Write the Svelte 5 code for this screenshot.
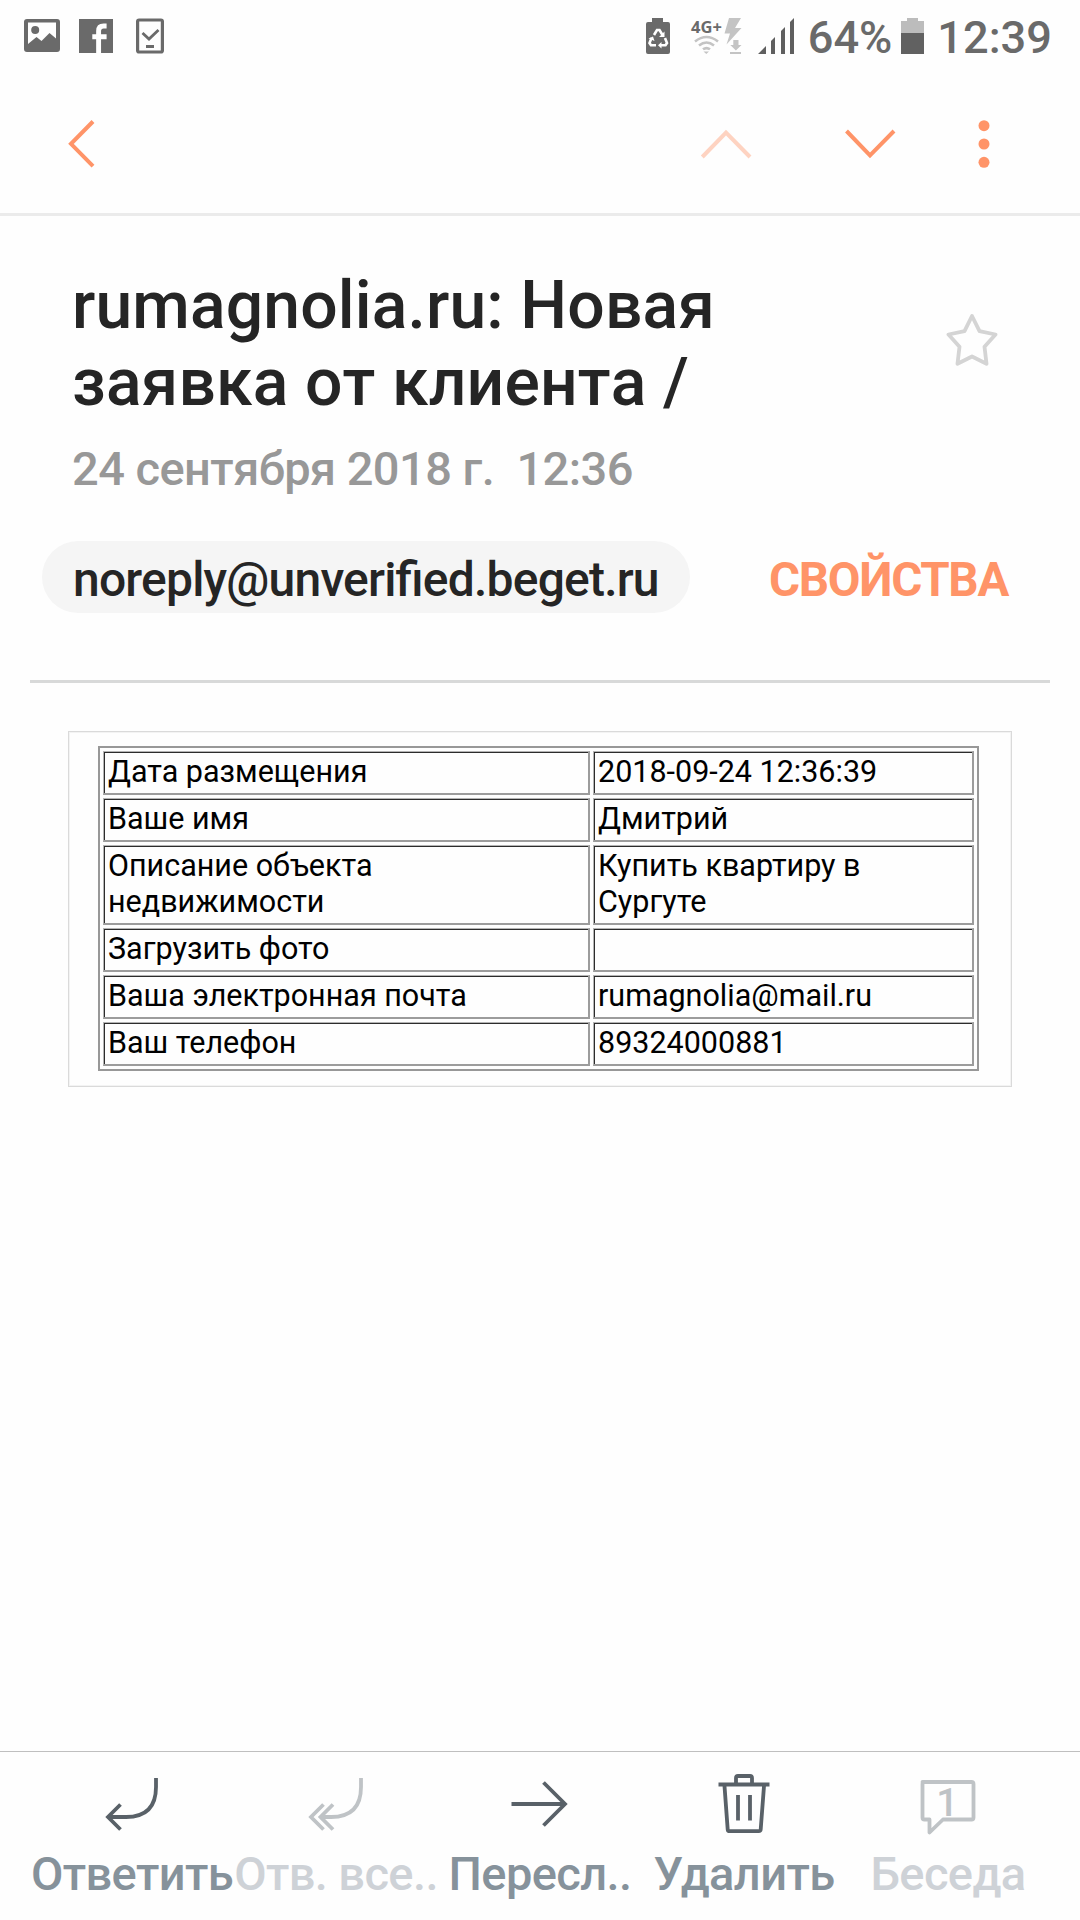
<script lang="ts">
  interface Action {
    icon: 'reply' | 'replyAll' | 'forward' | 'trash' | 'thread';
    label: string;
    disabled?: boolean;
  }

  const title = 'rumagnolia.ru: Новая заявка от клиента /';
  const sender = 'noreply@unverified.beget.ru';

  const rows = [
    ['Дата размещения', '2018-09-24 12:36:39'],
    ['Ваше имя', 'Дмитрий'],
    ['Описание объекта недвижимости', 'Купить квартиру в Сургуте'],
    ['Загрузить фото', ''],
    ['Ваша электронная почта', 'rumagnolia@mail.ru'],
    ['Ваш телефон', '89324000881'],
  ];

  const actions: Action[] = [
    { icon: 'reply', label: 'Ответить' },
    { icon: 'replyAll', label: 'Отв. все..', disabled: true },
    { icon: 'forward', label: 'Пересл..' },
    { icon: 'trash', label: 'Удалить' },
    { icon: 'thread', label: 'Беседа', disabled: true },
  ];
</script>

<div class="screen">
  <div class="status-bar">
    <svg width="144" height="40" viewBox="22 16 144 40">
      <path
        fill="#6a6a6a"
        fill-rule="evenodd"
        d="M27 19h30q3 0 3 3v27q0 3-3 3H27q-3 0-3-3V22q0-3 3-3zM28 22.5V44l8.500-7 5 4 8-8 6.500 5.500V22.500z"
      />
      <circle cx="35.2" cy="30" r="4" fill="#6a6a6a" />
      <rect x="79" y="19" width="34" height="34" fill="#6a6a6a" />
      <path d="M98.600 53V31q0-5 5-5h3M92.300 36.700h14.300" fill="none" stroke="#fff" stroke-width="4.900" />
      <rect x="137.600" y="20" width="24.800" height="32" rx="1.500" fill="none" stroke="#6a6a6a" stroke-width="3.200" />
      <path d="M142.500 33l6.500 6 9.500-9M146 46.500h8" fill="none" stroke="#6a6a6a" stroke-width="2.800" />
    </svg>

    <div class="status-right">
      <svg width="24" height="36" viewBox="645 18 24 36">
        <path fill="#6a6a6a" d="M651 18h11v4h5q2 0 2 2v28q0 2-2 2h-20q-2 0-2-2V24q0-2 2-2h4z" />
        <path
          d="M653 35l3-5h2.500l3 5M664 38l2 5-1.500 2.300h-5M655 45.300h-5l-1.500-2.300 2-5"
          fill="none"
          stroke="#fff"
          stroke-width="2.600"
        />
        <path fill="#fff" d="M663.500 31.500v5.500h-5.500zM660.500 42v6.500l-3.500-3.200zM647.500 38.500l4.500-2 1.500 4.500z" />
      </svg>
      <svg class="network" width="54" height="52" viewBox="688 10 54 52">
        <text class="network-type" x="690" y="32.500">4G+</text>
        <g fill="none" stroke="#c4c4c4" stroke-width="2.600">
          <path d="M694 41.500q11.500-9 23 0M698 45.500q7.500-6 15 0M702 49.300q3.500-2.500 7 0" />
        </g>
        <path fill="#c4c4c4" d="M702.500 51.500h5.500l-2.700 2.500z" />
        <path fill="#c4c4c4" d="M728 18h12l-6 10h6.500L725.500 44.500l3.500-11h-5.500zM732.300 40h5.200v5h3l-5.600 5.500-5.600-5.500h3zM729 52h11v2h-11z" />
      </svg>
      <svg class="signal" width="36" height="36" viewBox="757 18 36 36">
        <path fill="#5f5f5f" d="M757 54l8-8v8zM770 54V41l4-4v17zM780 54V31l4-4v27zM789 54V22l4-4v36z" />
      </svg>
      <span class="percent">64%</span>
      <svg class="battery" width="23" height="36" viewBox="0 0 23 36">
        <path fill="#bcbcbc" d="M6 0h11v3h6v12H0V3h6z" />
        <path fill="#616161" d="M0 15h23v21H0z" />
      </svg>
      <span>12:39</span>
    </div>
  </div>

  <header class="toolbar">
    <svg width="30" height="50" viewBox="66 119 30 50">
      <path d="M93 121.500L71 143.800l22 22.400" />
    </svg>
    <svg class="prev" width="52" height="32" viewBox="700 128 52 32">
      <path d="M702.300 157L726 132.500 750 157" />
    </svg>
    <svg class="next" width="52" height="32" viewBox="844 128 52 32">
      <path d="M846.500 131l23.500 24.500 24-24.500" />
    </svg>
    <svg class="more" width="12" height="50" viewBox="0 0 12 50">
      <circle cx="6" cy="6.700" r="5.500" />
      <circle cx="6" cy="25" r="5.500" />
      <circle cx="6" cy="43.300" r="5.500" />
    </svg>
  </header>

  <section class="subject">
    <div class="subject-text">
      <h1>{title}</h1>
      <div class="date">24 сентября 2018 г.&nbsp; 12:36</div>
    </div>
    <svg class="star" width="52" height="54" viewBox="946 313 52 54">
      <path d="M972 316l7.500 15.200 16 3.300-11 12.200 2 17.100-14.500-7.300-14.500 7.300 2-17.100-11-12.200 16-3.300z" />
    </svg>
  </section>

  <div class="sender-row">
    <span class="chip">{sender}</span>
    <span class="details">СВОЙСТВА</span>
  </div>

  <main class="message">
    <div class="frame">
      <table>
        <tbody>
          {#each rows as [name, value]}
            <tr>
              <td class="name">{name}</td>
              <td>{value}</td>
            </tr>
          {/each}
        </tbody>
      </table>
    </div>
  </main>

  <nav class="actions">
    {#each actions as action}
      <div class="action" class:disabled={action.disabled}>
        <svg width="62" height="66" viewBox="0 0 62 66">
          {#if action.icon === 'reply'}
            <path d="M55 8v9q0 30-30 30H7M19.500 34.500L7 47l12.500 12.500" />
          {:else if action.icon === 'replyAll'}
            <path d="M56 8v9q0 30-30 30H17M28 34.500L15.500 47 28 59.500M18.500 34.500L6 47l12.500 12.500" />
          {:else if action.icon === 'forward'}
            <path d="M2.500 34h54M34.500 12.500L56 34 34.500 55.500" />
          {:else if action.icon === 'trash'}
            <path d="M5.500 14.500h51M23 13V8q0-2 2-2h12q2 0 2 2v5M11.500 16l3.200 43.500q.1 1.700 2 1.700h29q1.900 0 2-1.700L51 16M25 25v25.500M37 25v25.500" />
          {:else}
            <path stroke-linejoin="round" d="M5.500 12h49q2 0 2 2v33.500q0 2-2 2H26L12.500 62.500v-13h-5q-2 0-2-2V14q0-2 2-2z" />
            <text class="count" x="30" y="45.800">1</text>
          {/if}
        </svg>
        <span>{action.label}</span>
      </div>
    {/each}
  </nav>
</div>

<style>
  :global(body) {
    background: #fefefe;
  }

  .screen {
    width: 1080px;
    height: 1920px;
    display: flex;
    flex-direction: column;
    background: #fefefe;
    font-family: Roboto, sans-serif;
    font-weight: 500;
    color: #252525;
    overflow: hidden;
  }

  .status-bar {
    height: 72px;
    padding: 0 28px 0 22px;
    display: flex;
    justify-content: space-between;
    align-items: center;
    box-sizing: border-box;
    font-size: 45.2px;
    line-height: 68px;
    color: #6a6a6a;
  }

  .status-right {
    display: flex;
    align-items: center;
    white-space: nowrap;
  }

  .status-right span {
    padding-top: 3px;
  }

  .network {
    margin-left: 19px;
  }

  .network-type {
    font: 700 16.5px 'Open Sans', sans-serif;
    fill: #6a6a6a;
  }

  .signal {
    margin-left: 15px;
  }

  .percent {
    margin-left: 14px;
  }

  .battery {
    margin: 0 13px 0 9px;
  }

  .toolbar {
    height: 144px;
    padding: 3px 90px 0 66px;
    display: flex;
    align-items: center;
    box-sizing: border-box;
    border-bottom: 3px solid #ebebeb;
  }

  .toolbar svg {
    fill: none;
    stroke: #ff9468;
    stroke-width: 4;
  }

  .toolbar .prev {
    margin-left: auto;
    opacity: 0.4;
  }

  .toolbar .next {
    margin-left: 92px;
  }

  .toolbar .more {
    margin-left: 82px;
    fill: #ff9468;
    stroke: none;
  }

  .subject {
    display: flex;
    justify-content: space-between;
    padding: 51px 82px 0 72px;
  }

  .subject-text {
    width: 700px;
  }

  h1 {
    margin: 0;
    font-size: 66px;
    font-weight: 500;
    line-height: 77px;
    letter-spacing: 0.15px;
    font-kerning: none;
  }

  .date {
    margin-top: 20px;
    font-size: 47px;
    line-height: 56px;
    letter-spacing: -0.55px;
    color: #989898;
  }

  .star {
    margin-top: 46px;
    fill: none;
    stroke: #d4d4d4;
    stroke-width: 3.8;
    stroke-linejoin: round;
  }

  .sender-row {
    margin: 44px 30px 0;
    padding: 0 42px 67px 12px;
    display: flex;
    justify-content: space-between;
    align-items: center;
    border-bottom: 3px solid #d8d9d9;
    font-size: 48px;
    line-height: 72px;
  }

  .chip,
  .details {
    height: 72px;
    padding-top: 3px;
    box-sizing: border-box;
    white-space: nowrap;
  }

  .chip {
    width: 648px;
    padding-left: 31px;
    border-radius: 36px;
    background: #f5f5f5;
    letter-spacing: -0.8px;
    font-feature-settings: 'liga' 1;
  }

  .details {
    font-size: 47.5px;
    font-weight: 700;
    letter-spacing: -1.3px;
    color: #ff9468;
  }

  .message {
    flex: 1;
    padding: 48px 68px 0;
  }

  .frame {
    height: 356px;
    padding: 14px 29px;
    box-sizing: border-box;
    border: 1px solid #dadada;
    box-shadow: inset 0 0 0 1px #f3f3f3;
  }

  table {
    width: 881px;
    table-layout: fixed;
    border: 2px solid #989898;
    border-collapse: separate;
    border-spacing: 3px;
    color: #000;
    font-size: 30.5px;
    font-weight: 400;
    line-height: 35.5px;
  }

  td {
    height: 44px;
    padding: 2px 2px 3.5px 4px;
    box-sizing: border-box;
    border: solid #9c9c9c;
    border-width: 1px 2px 2px 1px;
    border-top-color: #b4b4b4;
    border-left-color: #b4b4b4;
    box-shadow: inset 1px 1px #2c2c2c;
    vertical-align: top;
  }

  td.name {
    width: 487px;
  }

  .actions {
    height: 169px;
    padding: 18px 30px 0;
    display: grid;
    grid-template-columns: repeat(5, 204px);
    box-sizing: border-box;
    border-top: 1px solid #bfbfbf;
  }

  .action {
    display: flex;
    flex-direction: column;
    align-items: center;
    color: #86929b;
    font-size: 47px;
    line-height: 56px;
    letter-spacing: -0.6px;
    white-space: nowrap;
  }

  .action span {
    margin-top: 10px;
  }

  .action svg {
    fill: none;
    stroke: #596168;
    stroke-width: 3.8;
  }

  .disabled {
    color: #ced2d7;
  }

  .disabled svg {
    stroke: #bfc3c6;
  }

  .count {
    font-size: 39px;
    fill: #bfc3c6;
    stroke: none;
    text-anchor: middle;
  }
</style>
